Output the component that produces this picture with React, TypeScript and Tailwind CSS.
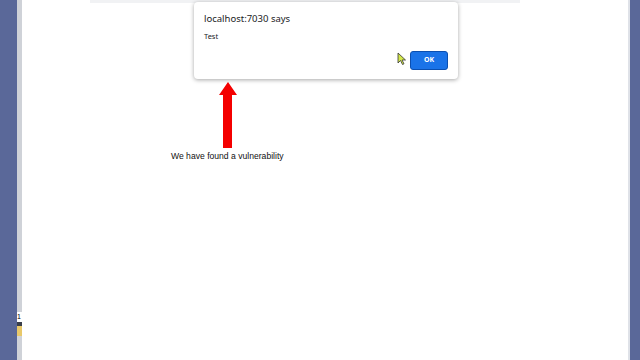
export default function App() {
  return (
    <div className="relative flex h-[360px] w-[640px] overflow-hidden bg-white font-['Liberation_Sans',Arial,sans-serif]">
      {/* left window edge */}
      <div className="flex w-[17px] flex-col bg-[#5a6899]">
        <div className="flex-1" />
      </div>
      <div className="flex w-[5px] flex-col bg-[#cfd2d8]">
        <div className="h-[312px]" />
        <div className="h-[10px] bg-white text-[7px] leading-[10px] text-black">1</div>
        <div className="h-[4px] bg-[#3a3f4a]" />
        <div className="h-[10px] bg-[#e8c86a]" />
        <div className="flex-1" />
      </div>

      {/* page */}
      <div className="flex flex-1 flex-col">
        <div className="ml-[68px] h-[3px] w-[430px] bg-[#f1f2f4]" />
        <div className="flex flex-col pl-[149px] pt-[79px]">
          <div className="pl-[47px]">
            <svg width="20" height="67" viewBox="0 0 20 67">
              <polygon points="10,0 19,13 14,13 14,66 5,66 5,13 1,13" fill="#f40000" />
            </svg>
          </div>
          <p className="mt-[1px] text-[8.6px] leading-[12px] text-[#111]">We have found a vulnerability</p>
        </div>
      </div>

      {/* right window edge */}
      <div className="w-[2px] bg-[#dfe2e8]" />
      <div className="w-[10px] bg-[#5a6899]" />

      {/* alert dialog */}
      <div className="absolute left-[194px] top-[2px] h-[77px] w-[264px] rounded-[4px] bg-white shadow-[0_1px_4px_rgba(0,0,0,0.35)] font-['Noto_Sans',sans-serif]">
        <div className="px-[10px] pt-[10px]">
          <p className="text-[9.5px] leading-[14px] text-[#202124]">localhost:7030 says</p>
          <p className="mt-[5px] text-[7.5px] leading-[10px] text-[#202124]">Test</p>
        </div>
        <div className="mt-[10px] flex items-center justify-end gap-[3px] pr-[10px]">
          <svg width="10" height="13" viewBox="0 0 10 13" className="-mt-[4px]">
            <polygon points="1,1 1,11 3.5,8.5 5.5,12.5 7,11.8 5,8 8.5,8" fill="#d4e84a" stroke="#333" strokeWidth="0.8" />
          </svg>
          <button className="flex h-[19px] w-[38px] items-center justify-center rounded-[3px] border border-[#0b4fb0] bg-[#1a73e8] text-[7px] font-bold text-white">
            OK
          </button>
        </div>
      </div>
    </div>
  );
}
